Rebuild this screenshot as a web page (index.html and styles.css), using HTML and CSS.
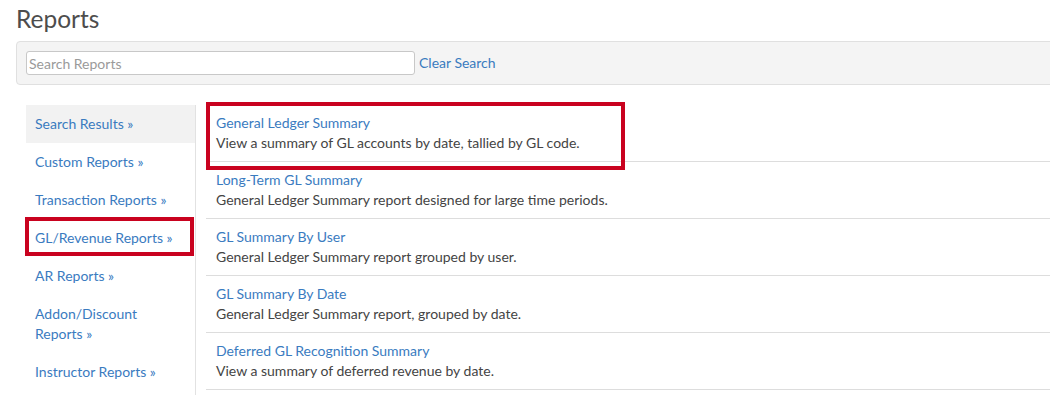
FILE: index.html
```html
<!DOCTYPE html>
<html lang="en">
<head>
<meta charset="utf-8">
<title>Reports</title>
<link rel="stylesheet" href="styles.css">
</head>
<body>
<div class="page">
  <h1 class="page-title">Reports</h1>
  <div class="search-panel">
    <input class="search-input" type="text" placeholder="Search Reports">
    <a class="clear-link" href="#">Clear Search</a>
  </div>
  <div class="reports">
    <ul class="nav">
      <li class="nav-item active"><a href="#">Search Results »</a></li>
      <li class="nav-item"><a href="#">Custom Reports »</a></li>
      <li class="nav-item"><a href="#">Transaction Reports »</a></li>
      <li class="nav-item marked"><a href="#">GL/Revenue Reports »</a></li>
      <li class="nav-item"><a href="#">AR Reports »</a></li>
      <li class="nav-item"><a href="#">Addon/Discount Reports »</a></li>
      <li class="nav-item"><a href="#">Instructor Reports »</a></li>
    </ul>
    <ul class="list">
      <li class="report marked">
        <a class="report-title" href="#">General Ledger Summary</a>
        <div class="report-desc">View a summary of GL accounts by date, tallied by GL code.</div>
      </li>
      <li class="report">
        <a class="report-title" href="#">Long-Term GL Summary</a>
        <div class="report-desc">General Ledger Summary report designed for large time periods.</div>
      </li>
      <li class="report">
        <a class="report-title" href="#">GL Summary By User</a>
        <div class="report-desc">General Ledger Summary report grouped by user.</div>
      </li>
      <li class="report">
        <a class="report-title" href="#">GL Summary By Date</a>
        <div class="report-desc">General Ledger Summary report, grouped by date.</div>
      </li>
      <li class="report">
        <a class="report-title" href="#">Deferred GL Recognition Summary</a>
        <div class="report-desc">View a summary of deferred revenue by date.</div>
      </li>
    </ul>
  </div>
</div>
</body>
</html>
```
FILE: styles.css
```css
* { box-sizing: border-box; }
html, body {
  margin: 0;
  padding: 0;
  background: #fff;
  overflow: hidden;
}
body {
  font-family: Lato, "Open Sans", "Liberation Sans", sans-serif;
  font-size: 14px;
  line-height: 20px;
  color: #444;
}
a { color: #3a7bbf; text-decoration: none; }
.page {
  width: 1100px;
  padding: 0 0 0 16px;
}
.page-title {
  margin: 0;
  padding: 4px 0 0 0;
  height: 41px;
  font-size: 24.5px;
  line-height: 30px;
  font-weight: 400;
  color: #4d4d4d;
}
.search-panel {
  display: flex;
  align-items: center;
  gap: 4px;
  height: 44px;
  padding: 0 9px;
  background: #f4f4f4;
  border: 1px solid #e0e0e0;
  border-radius: 4px;
}
.search-input {
  width: 389px;
  height: 24px;
  margin: 0;
  padding: 0 2px;
  font-family: inherit;
  font-size: 14px;
  color: #444;
  background: #fff;
  border: 1px solid #c8c8c8;
  border-radius: 3px;
  outline: none;
}
.search-input::placeholder { color: #9a9a9a; }
.clear-link { font-size: 14px; }
.reports {
  display: flex;
  gap: 10px;
  margin: 20px 0 0 10px;
}
.nav, .list {
  list-style: none;
  margin: 0;
  padding: 0;
}
.nav {
  width: 170px;
  flex: none;
  border-right: 1px solid #e2e2e2;
  min-height: 300px;
}
.nav-item {
  position: relative;
  padding: 9px 10px 9px 9px;
}
.nav-item.active { background: #f2f2f2; }
.nav-item.marked::after {
  content: "";
  position: absolute;
  top: -2px;
  left: -1px;
  right: 1px;
  bottom: 1px;
  border: 4px solid #c9021f;
  pointer-events: none;
}
.list { flex: 1; }
.report {
  position: relative;
  padding: 8px 10px;
  border-bottom: 1px solid #dddddd;
}
.report-title { display: block; }
.report-desc { color: #444; }
.report.marked::after {
  content: "";
  position: absolute;
  top: -3px;
  left: 0;
  width: 411px;
  height: 60px;
  border: 4px solid #c9021f;
  pointer-events: none;
}
```
